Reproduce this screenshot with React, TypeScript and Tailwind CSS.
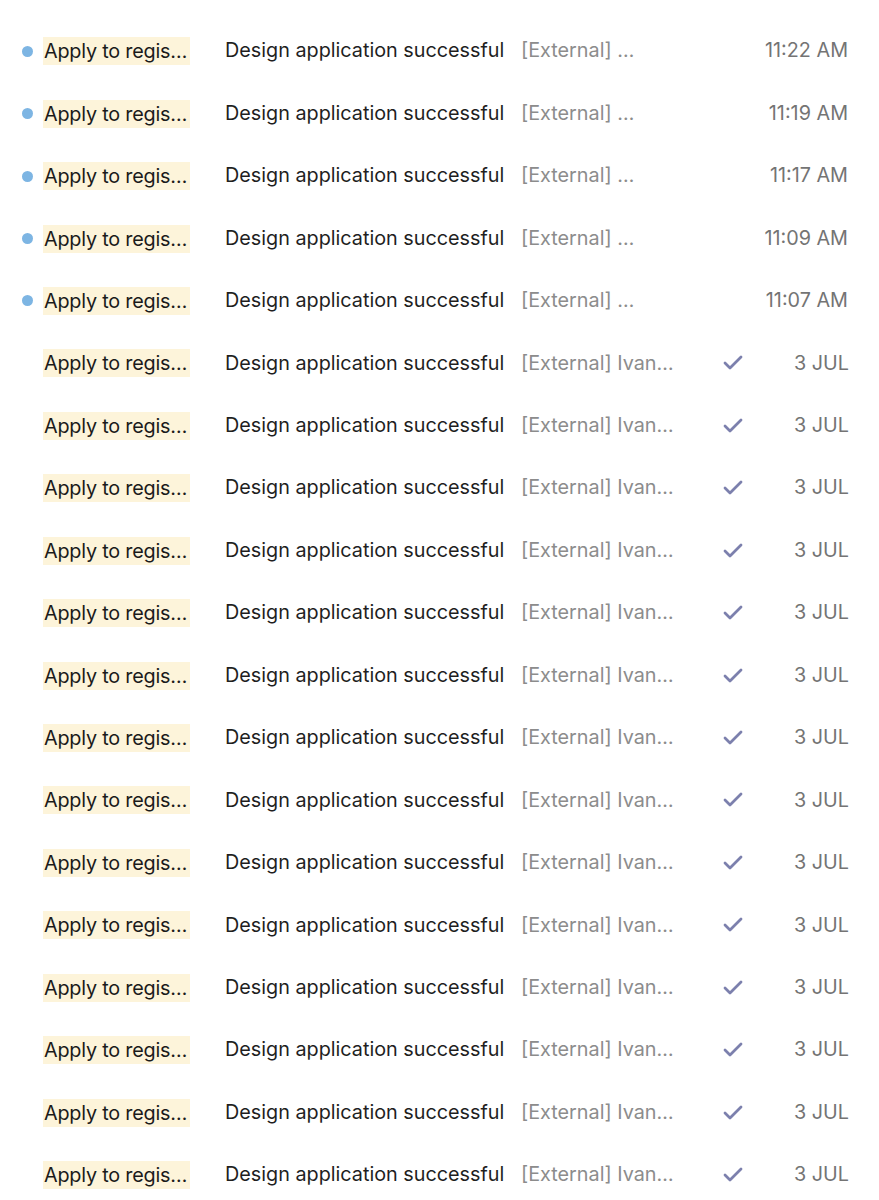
import { Check } from 'lucide-react';

type Mail = {
  unread: boolean;
  preview: string;
  date: string;
};

const UNREAD_TIMES = ['11:22 AM', '11:19 AM', '11:17 AM', '11:09 AM', '11:07 AM'];

const MAILS: Mail[] = [
  ...UNREAD_TIMES.map((date) => ({ unread: true, preview: '[External] …', date })),
  ...Array.from({ length: 14 }, () => ({ unread: false, preview: '[External] Ivan…', date: '3 JUL' })),
];

function MailRow({ mail }: { mail: Mail }) {
  return (
    <div className="flex h-[62.45px] items-center whitespace-nowrap pl-[22px] pr-[31px] text-[19.8px]">
      <div className="flex w-[21px] shrink-0 items-center">
        {mail.unread && <span className="block h-[11px] w-[11px] rounded-full bg-[#7db5e3]" />}
      </div>
      <div className="w-[147px] shrink-0 overflow-hidden bg-[#fdf4da] py-[1px] pl-[1px] leading-[26px] tracking-[-0.2px] text-[#1b1b1b]">
        Apply to regis…
      </div>
      <div className="ml-[35px] w-[296px] shrink-0 text-[#1f1f1f]">Design application successful</div>
      <div className="w-[200px] shrink-0 text-[#8c8c8c]">{mail.preview}</div>
      <div className="flex flex-1 items-center justify-end">
        {!mail.unread && (
          <Check className="mr-[49px] h-[24px] w-[24px] shrink-0 text-[#7c80ad]" strokeWidth={2.8} />
        )}
        <span className="text-[#747474]">{mail.date}</span>
      </div>
    </div>
  );
}

export default function App() {
  return (
    <div
      className="min-h-[1200px] w-[879px] bg-white pt-[20px]"
      style={{ fontFamily: 'Inter, "Noto Sans", sans-serif' }}
    >
      {MAILS.map((mail, index) => (
        <MailRow key={index} mail={mail} />
      ))}
    </div>
  );
}
